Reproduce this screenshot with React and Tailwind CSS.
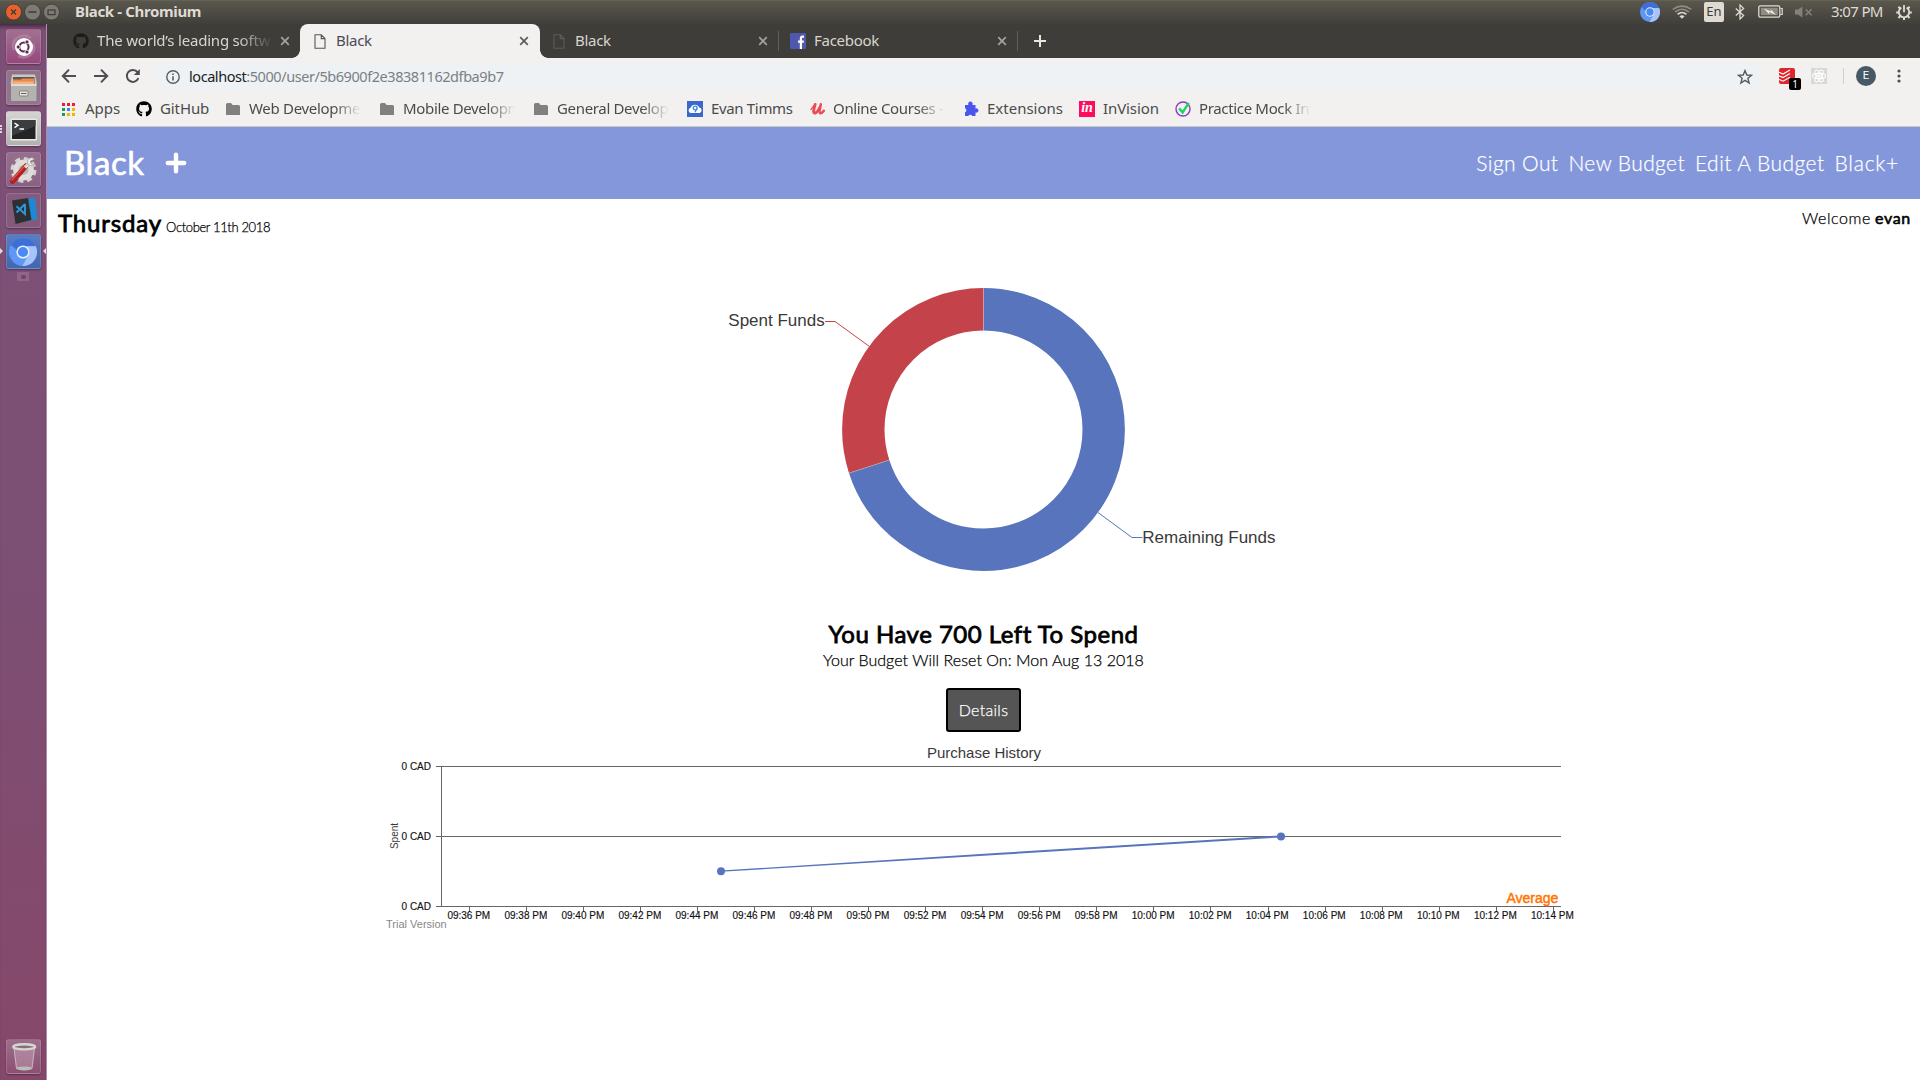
import React from "react";
import { FaGithub } from "react-icons/fa";

const UBUNTU = "font-['Noto_Sans',sans-serif]";
const QUICK = "font-['Lato',sans-serif]";

function Close({ className = "" }) {
  return (
    <svg viewBox="0 0 10 10" className={"size-[10px] shrink-0 " + className}>
      <path d="M1.2 1.2 8.8 8.8M8.8 1.2 1.2 8.8" stroke="currentColor" strokeWidth="1.7" />
    </svg>
  );
}

function Doc({ className = "" }) {
  return (
    <svg viewBox="0 0 12 15" className={"h-[15px] w-3 shrink-0 " + className}>
      <path d="M1 .8H7.2L11 4.6V14.2H1ZM7.2 .8V4.6H11" fill="none" stroke="currentColor" strokeWidth="1.1" />
    </svg>
  );
}

function Chromium({ className = "" }) {
  return (
    <svg viewBox="0 0 28 28" className={"shrink-0 " + className}>
      <circle cx="14" cy="14" r="14" fill="#5f97f6" />
      <path d="M14 0A14 14 0 0 1 26.8 8.3H14A6 6 0 0 0 8.3 12.5L2 7A14 14 0 0 1 14 0Z" fill="#3e6fd6" />
      <path d="M26.8 8.3A14 14 0 0 1 13.4 28L19.6 16.6A6 6 0 0 0 17 8.3Z" fill="#a6c4fb" />
      <circle cx="14" cy="14" r="6.6" fill="#e9f0fe" />
      <circle cx="14" cy="14" r="5.1" fill="#4a8af4" />
    </svg>
  );
}

function TitleBar() {
  return (
    <div className="flex h-6 items-center border-t border-[#646152] bg-linear-to-b from-[#5a574e] to-[#403f3a] pb-[2px]">
      <svg viewBox="0 0 62 22" className="h-[22px] w-[62px] shrink-0">
        <circle cx="13.5" cy="11" r="8" fill="#e9602f" stroke="#3a3833" strokeWidth=".8" />
        <circle cx="32.5" cy="11" r="8" fill="#7c7a72" stroke="#3a3833" strokeWidth=".8" />
        <circle cx="51.5" cy="11" r="8" fill="#7c7a72" stroke="#3a3833" strokeWidth=".8" />
        <path d="M11 8.5 16 13.5M16 8.5 11 13.5M28.5 11H36.5" stroke="#3c3b37" strokeWidth="1.3" />
        <rect x="48" y="9" width="7" height="4.6" fill="none" stroke="#3c3b37" strokeWidth="1.2" />
      </svg>
      <span className={`ml-[13px] text-[15px] font-bold tracking-[-0.35px] text-[#dfdbd2] ${UBUNTU}`}>Black - Chromium</span>
      <div className="ml-auto flex h-full items-center text-[#dfdbd2]">
        <Chromium className="mr-3 size-5" />
        <svg viewBox="0 0 20 14" className="mr-3 h-3.5 w-5" fill="none" strokeWidth="1.6">
          <path d="M.8 4.4Q10 -2.2 19.2 4.4M3.2 7Q10 1.6 16.8 7" stroke="#8f8c83" />
          <path d="M5.6 9.4Q10 5.6 14.4 9.4" stroke="#dfdbd2" />
          <path d="M7.4 11.2Q10 9.4 12.6 11.2L10 13.8Z" fill="#dfdbd2" stroke="none" />
        </svg>
        <span className={`mr-2.5 flex size-5 items-center justify-center rounded-[2px] bg-[#dfdbd2] text-[13px] text-[#3c3b37] ${UBUNTU}`}>En</span>
        <svg viewBox="0 0 12 16" className="mr-3 h-4 w-3" fill="none" stroke="currentColor" strokeWidth="1.3">
          <path d="M1.8 4.4 9.6 11.6 6 15V1L9.6 4.4 1.8 11.6" />
        </svg>
        <svg viewBox="0 0 25 13" className="mr-3 h-[13px] w-[25px]">
          <rect x=".8" y=".8" width="21" height="11.4" rx="1.6" fill="none" stroke="#dfdbd2" strokeWidth="1.3" />
          <rect x="2.8" y="2.8" width="17" height="7.4" fill="#8f8c83" />
          <path d="M22.5 3.5H24.2V9.5H22.5" fill="none" stroke="#dfdbd2" strokeWidth="1.2" />
          <path d="M6 3.4 13 6.6 12.6 4.2 18 10 11 7 11.4 9.4Z" fill="#f2efe8" />
        </svg>
        <svg viewBox="0 0 18 12" className="mr-[18px] h-3 w-[18px]">
          <path d="M0 3.6H3L7.4 .4V11.6L3 8.4H0Z" fill="#83817a" />
          <path d="M10.6 3.2 16.6 9.2M16.6 3.2 10.6 9.2" stroke="#83817a" strokeWidth="1.5" />
        </svg>
        <span className={`w-[53px] text-[15px] tracking-[-0.65px] whitespace-nowrap ${UBUNTU}`}>3:07 PM</span>
        <svg viewBox="0 0 16 16" className="mr-2 ml-3 size-4" fill="none" stroke="currentColor">
          <path d="M5.4 3.6A5.2 5.2 0 1 0 10.6 3.6" strokeWidth="1.8" />
          <path d="M8 1V8.2" strokeWidth="1.8" />
          <path d="M8 13.4V16M.2 8.4H2.8M13.2 8.4H15.8M2.4 2.8 4.4 4.8M13.6 2.8 11.6 4.8M2.4 14 4.4 12M13.6 14 11.6 12" strokeWidth="2" />
        </svg>
      </div>
    </div>
  );
}

function Tile({ className = "", children }) {
  return (
    <div className={"flex size-[35px] shrink-0 items-center justify-center rounded-[3px] border border-white/15 shadow-[0_1px_2px_rgba(0,0,0,0.35)] " + className}>
      {children}
    </div>
  );
}

function Launcher() {
  return (
    <aside className="relative flex w-[47px] shrink-0 flex-col items-center gap-1.5 border-r border-[#b189ab] bg-linear-to-b from-[#7e5078] via-[#7c4f74] to-[#86486a] pt-[5px] shadow-[inset_0_6px_5px_-4px_rgba(30,10,30,0.7)]">
      <Tile className="bg-linear-to-b from-[#a0718f] to-[#96487e]">
        <svg viewBox="0 0 33 33" className="size-[33px]">
          <path d="M7 20C3 10 14 2 24 8M26 14C30 22 20 30 11 26" fill="none" stroke="#b88aa8" strokeWidth="3" opacity=".6" />
          <circle cx="17" cy="17" r="9" fill="#fff" />
          <circle cx="17" cy="17" r="4.6" fill="none" stroke="#5e2750" strokeWidth="2" />
          <g fill="#5e2750" stroke="#fff" strokeWidth=".8">
            <circle cx="11.2" cy="17" r="2" />
            <circle cx="20" cy="11.9" r="2" />
            <circle cx="20" cy="22.1" r="2" />
          </g>
        </svg>
      </Tile>
      <Tile className="bg-linear-to-b from-[#8f7288] to-[#95748f]">
        <svg viewBox="0 0 33 33" className="size-[33px]">
          <path d="M5 3.5H28L30 13H3.5Z" fill="#c9c7c3" />
          <path d="M6 6H27.5V13H6Z" fill="#5e5750" />
          <path d="M6 8.5H14L15 7.5H27V14H6Z" fill="#ec8a4b" />
          <path d="M6.4 10.5H26.8V14H6.4Z" fill="#f5b27d" />
          <rect x="4" y="13" width="25.5" height="17" rx="1" fill="#b4b2af" />
          <rect x="4" y="13" width="25.5" height="2" fill="#deddda" />
          <rect x="12.5" y="20" width="8.5" height="5" rx="1" fill="#e6e4e1" stroke="#77746f" strokeWidth=".8" />
          <path d="M14 22.5H19.5" stroke="#66625d" />
        </svg>
      </Tile>
      <Tile className="bg-linear-to-b from-[#d5d4d3] to-[#b3b1b0]">
        <svg viewBox="0 0 33 33" className="size-[33px]">
          <rect x="3.5" y="6.5" width="26.5" height="22" rx="1" fill="#e8e8e6" />
          <rect x="5" y="8" width="23.5" height="19" fill="#232425" />
          <path d="M5 8H28.5V14L5 24Z" fill="#3b3d3e" />
          <path d="M7.5 11 11 13.3 7.5 15.6M12.5 17H17" fill="none" stroke="#fff" strokeWidth="1.4" />
        </svg>
      </Tile>
      <Tile className="bg-linear-to-b from-[#95708d] to-[#8a6083]">
        <svg viewBox="0 0 33 33" className="size-[33px]">
          <circle cx="16.5" cy="17" r="11" fill="none" stroke="#d4d2cf" strokeWidth="4" strokeDasharray="5 3.64" />
          <circle cx="16.5" cy="17" r="10.5" fill="#deddda" />
          <circle cx="16.5" cy="17" r="5" fill="#b9b5b6" />
          <path d="M5.5 28.5 19 13" stroke="#b51f22" strokeWidth="5" strokeLinecap="round" />
          <path d="M5 27 17.5 13" stroke="#df5552" strokeWidth="1.2" strokeLinecap="round" />
          <path d="M18 14.5 21 11.5" stroke="#d8d8d8" strokeWidth="3.4" />
          <path d="M27.5 6.2A4 4 0 1 0 27.5 11.5L24 10.8 23.5 8Z" fill="#ececec" stroke="#8e8e8e" strokeWidth=".6" />
        </svg>
      </Tile>
      <Tile className="bg-linear-to-b from-[#855a7d] to-[#835a7b]">
        <svg viewBox="0 0 33 33" className="size-[33px]">
          <path d="M14 6 28 3.5 30.5 25 18 28Z" fill="#1e88d2" />
          <path d="M5 6.5 21 4 24.5 26 8.5 30Z" fill="#2e2f31" />
          <path d="M18 10V20L9.5 12.2M18 10 9.5 18.5" fill="none" stroke="#2d94dc" strokeWidth="2" />
        </svg>
      </Tile>
      <Tile className="bg-linear-to-b from-[#5a7cc2] to-[#4366ad]">
        <Chromium className="size-7" />
      </Tile>
      <div className="-mt-[3px] flex h-[9px] w-3 items-center justify-center bg-[#8f6687]">
        <span className="h-1 w-[5px] rounded-full bg-[#6d4568]" />
      </div>
      <Tile className="mt-auto mb-1.5 bg-linear-to-b from-[#9d6d8b] to-[#8c4f74]">
        <svg viewBox="0 0 33 33" className="size-[33px]">
          <path d="M6.5 7 9 29H25.5L28 7Z" fill="#c9a9bc" opacity=".45" />
          <path d="M7 8 9.5 28M27.5 8 25 28" stroke="#d9c8d2" strokeWidth="1" opacity=".7" />
          <ellipse cx="17.2" cy="28.4" rx="8" ry="2" fill="#b9bfb4" />
          <ellipse cx="17.2" cy="6.8" rx="11" ry="2.6" fill="#8d6a80" stroke="#d5d8d1" strokeWidth="2.4" />
        </svg>
      </Tile>
      <span className="absolute top-[101px] left-0 h-2 w-0.5 bg-[repeating-linear-gradient(#ddd_0_2px,transparent_2px_3px)]" />
      <svg viewBox="0 0 46 8" className="absolute top-[223px] left-0 h-2 w-[46px]" fill="#ddd">
        <path d="M0 1 3 4 0 7ZM46 1 43 4 46 7Z" />
      </svg>
    </aside>
  );
}

const fade = "[mask-image:linear-gradient(to_right,black_80%,transparent)]";

function TabStrip() {
  return (
    <div className={`flex h-[34px] bg-[#3e3d39] text-[15px] tracking-[-0.28px] whitespace-nowrap text-[#d9d6ce] ${UBUNTU}`}>
      <div className="flex w-[253px] items-center pl-[26px]">
        <FaGithub className="size-4 text-[#1c1c1a]" />
        <span className={`ml-2 w-[176px] pb-0.5 tracking-[-0.2px] ${fade}`}>The world’s leading softw</span>
        <Close className="ml-[7px] text-[#a5a39d]" />
      </div>
      <div className="relative flex w-60 items-center rounded-t-lg bg-[#f2f1f0] text-[#4a4a55]">
        <span className="absolute bottom-0 -left-2 size-2 bg-[radial-gradient(circle_at_0_0,transparent_7.5px,#f2f1f0_8px)]" />
        <span className="absolute -right-2 bottom-0 size-2 bg-[radial-gradient(circle_at_100%_0,transparent_7.5px,#f2f1f0_8px)]" />
        <Doc className="ml-3.5 text-[#55565a]" />
        <span className="ml-2.5 w-[183px] pb-0.5">Black</span>
        <Close className="text-[#5a5b5f]" />
      </div>
      <div className="flex w-[239px] items-center">
        <Doc className="ml-[13px] text-[#5d5c58]" />
        <span className="ml-2.5 w-[184px] pb-0.5">Black</span>
        <Close className="text-[#a5a39d]" />
        <span className="ml-2.5 h-5 w-px bg-[#5f5e59]" />
      </div>
      <div className="flex items-center">
        <svg viewBox="0 0 16 16" className="ml-[11px] size-4 shrink-0">
          <rect width="16" height="16" rx="1" fill="#4e58ae" />
          <path d="M14 3.6H12.6Q10.9 3.6 10.9 5.4V16M8 8.6H13.8" fill="none" stroke="#fff" strokeWidth="2.2" />
        </svg>
        <span className="ml-2 w-[183px] pb-0.5">Facebook</span>
        <Close className="text-[#a5a39d]" />
        <span className="ml-2.5 h-5 w-px bg-[#5f5e59]" />
        <svg viewBox="0 0 12 12" className="ml-4 size-3">
          <path d="M6 0V12M0 6H12" stroke="#e9e6da" strokeWidth="2" />
        </svg>
      </div>
    </div>
  );
}

function Toolbar() {
  return (
    <div className="flex h-9 items-center bg-[#f2f1f0] text-[#4d4e52]">
      <svg viewBox="0 0 16 16" className="ml-3.5 size-4" fill="none" stroke="currentColor" strokeWidth="2">
        <path d="M15 8H2M8 1.6 1.8 8 8 14.4" />
      </svg>
      <svg viewBox="0 0 16 16" className="ml-4 size-4" fill="none" stroke="currentColor" strokeWidth="2">
        <path d="M1 8H14M8 1.6 14.2 8 8 14.4" />
      </svg>
      <svg viewBox="0 0 16 16" className="ml-4 size-4" fill="none" stroke="currentColor" strokeWidth="2">
        <path d="M13.4 10.2A6 6 0 1 1 12.6 4.2" />
        <path d="M14.8 1V7H8.8Z" fill="currentColor" stroke="none" />
      </svg>
      <div className={`mt-0.5 ml-3.5 flex h-7 flex-1 items-center rounded-full bg-[#eef2f4] text-[14.5px] tracking-[-0.44px] ${UBUNTU}`}>
        <svg viewBox="0 0 14 14" className="ml-[11px] size-3.5" fill="none" stroke="#5a5d61" strokeWidth="1.4">
          <circle cx="7" cy="7" r="6.2" />
          <path d="M7 6.2V10.4M7 3.4V4.9" strokeWidth="1.6" />
        </svg>
        <span className="ml-[9px] pb-px whitespace-nowrap text-[#7c8085]">
          <span className="text-[#202124]">localhost</span>:5000/user/5b6900f2e38381162dfba9b7
        </span>
        <svg viewBox="0 0 16 16" className="mr-2.5 ml-auto size-4" fill="none" stroke="#55585c" strokeWidth="1.4">
          <path d="M8 1.6 9.8 6 14.6 6.3 10.9 9.3 12.1 14 8 11.4 3.9 14 5.1 9.3 1.4 6.3 6.2 6Z" />
        </svg>
      </div>
      <span className="relative ml-4 size-4 rounded-[2px] bg-[#e0262c]">
        <svg viewBox="0 0 16 16" className="size-4" fill="none" stroke="#fff" strokeWidth="1.2">
          <path d="M0 4.2 4 6 11 2M0 7.8 4 9.6 11 5.6M0 11.4 4 13.2 11 9.2" />
        </svg>
        <span className={`absolute top-2.5 left-2.5 flex h-3 w-3 items-center justify-center rounded-[2px] bg-black text-[10px] leading-none text-white ${UBUNTU}`}>1</span>
      </span>
      <svg viewBox="0 0 16 16" className="ml-4 size-4 bg-[#d8d8d7]" fill="none" stroke="#fff" strokeWidth="1.1">
        <ellipse cx="8" cy="8" rx="6.6" ry="2.6" />
        <ellipse cx="8" cy="8" rx="6.6" ry="2.6" transform="rotate(60 8 8)" />
        <ellipse cx="8" cy="8" rx="6.6" ry="2.6" transform="rotate(120 8 8)" />
        <circle cx="8" cy="8" r="1" fill="#fff" />
      </svg>
      <span className="ml-4 h-4 w-px bg-[#cfcfce]" />
      <span className="ml-3 flex size-5 items-center justify-center rounded-full bg-[#455a64] font-['Roboto',sans-serif] text-[11px] text-white">E</span>
      <svg viewBox="0 0 4 14" className="mr-[19px] ml-[21px] h-3.5 w-1" fill="#4d4e52">
        <circle cx="2" cy="2" r="1.6" />
        <circle cx="2" cy="7" r="1.6" />
        <circle cx="2" cy="12" r="1.6" />
      </svg>
    </div>
  );
}

function Folder() {
  return (
    <svg viewBox="0 0 14 12" className="h-3 w-3.5 shrink-0">
      <path d="M0 1.5Q0 0 1.5 0H5L6.5 2H12.5Q14 2 14 3.5V12H0Z" fill="#808080" />
    </svg>
  );
}

function Bookmark({ icon, label, className = "", iconWidth = "w-6" }) {
  return (
    <div className={"flex shrink-0 items-center " + className}>
      <span className={"flex shrink-0 items-center " + iconWidth}>{icon}</span>
      <span className="pb-0.5">{label}</span>
    </div>
  );
}

const APP_COLORS = ["#ef1c34", "#ef1c34", "#ef1c34", "#15a05b", "#4a7cf0", "#f4b400", "#15a05b", "#f4b400", "#f4b400"];

function Bookmarks() {
  return (
    <div className={`flex h-[33px] items-center border-b border-[#c9c8c6] bg-[#f2f1f0] pb-0.5 pl-[15px] text-[15px] tracking-[-0.34px] whitespace-nowrap text-[#4b4b4b] ${UBUNTU}`}>
      <Bookmark
        className="w-[74px] tracking-normal"
        label="Apps"
        iconWidth="w-[23px]"
        icon={
          <span className="grid grid-cols-3 gap-[2px]">
            {APP_COLORS.map((c, i) => (
              <span key={i} className="size-[3px]" style={{ background: c }} />
            ))}
          </span>
        }
      />
      <Bookmark className="w-[90px] tracking-[-0.1px]" label="GitHub" icon={<FaGithub className="size-4 text-black" />} />
      <Bookmark className={`mr-[19px] w-[135px] tracking-[-0.3px] ${fade}`} label="Web Developme" iconWidth="w-[23px]" icon={<Folder />} />
      <Bookmark className={`mr-[19px] w-[135px] ${fade}`} label="Mobile Developm" iconWidth="w-[23px]" icon={<Folder />} />
      <Bookmark className={`mr-[18px] w-[135px] ${fade}`} label="General Develop" iconWidth="w-[23px]" icon={<Folder />} />
      <Bookmark
        className="w-[123px]"
        label="Evan Timms"
        icon={
          <svg viewBox="0 0 16 16" className="size-4">
            <rect width="16" height="16" fill="#3d67cc" />
            <path d="M3.5 12A2.7 2.7 0 0 1 3.6 6.8 4.6 4.6 0 0 1 12.2 6.6 2.8 2.8 0 0 1 12.8 12Z" fill="#fff" />
            <circle cx="8.2" cy="7" r="1.9" fill="#fff" stroke="#3b8bd8" strokeWidth="1.4" />
            <path d="M9.8 7.6 8 11.2" stroke="#3b8bd8" strokeWidth="1.2" />
          </svg>
        }
      />
      <Bookmark
        className={`mr-[19px] w-[135px] ${fade}`}
        label="Online Courses -"
        iconWidth="w-[23px]"
        icon={
          <svg viewBox="0 0 16 16" className="size-4" fill="none" stroke="#ec4a55" strokeLinecap="round" strokeLinejoin="round">
            <path d="M1 8.4 4 4.6" strokeWidth="1.4" />
            <path d="M5.2 3.4C4.6 6 3.4 9 3.6 10.8 3.8 13.4 7.6 12 9.4 7" strokeWidth="2.8" />
            <path d="M10.8 3.4C10.2 6.600 8.800 11.600 10.200 12.200 11.400 12.500 12.800 11.200 13.800 9.800" strokeWidth="2.6" />
          </svg>
        }
      />
      <Bookmark
        className="w-[115px] tracking-normal"
        label="Extensions"
        iconWidth="w-[23px]"
        icon={
          <svg viewBox="0 0 15 16" className="h-4 w-[15px]" fill="#4a55ee">
            <path d="M1 4H4.400A2.300 2.300 0 1 1 8.400 4H11.500V7.400A2.200 2.200 0 1 1 11.500 11.500V15H8.200A2.100 2.100 0 0 0 4.300 15H1V11.400A2.200 2.200 0 0 0 1 7.300Z" />
          </svg>
        }
      />
      <Bookmark
        className="w-24 tracking-[-0.1px]"
        label="InVision"
        icon={<span className="flex size-4 items-center justify-center bg-[#ff0b5e] pb-0.5 font-['Liberation_Serif',serif] text-[14px] leading-none font-bold text-white italic">in</span>}
      />
      <Bookmark
        className={`w-[136px] ${fade}`}
        label="Practice Mock Int"
        icon={
          <svg viewBox="0 0 16 16" className="size-4" fill="none">
            <circle cx="8" cy="8" r="7" stroke="#9136c9" strokeWidth="1.4" />
            <path d="M4.2 7.4 7.6 11.4 13.8 1.8" stroke="#18d860" strokeWidth="2.4" />
          </svg>
        }
      />
    </div>
  );
}

function FundsDonut() {
  const cx = 983.5;
  const cy = 429.5;
  const r = 120.2;
  const c = 2 * Math.PI * r;
  return (
    <svg viewBox="47 270 1873 335" className="block h-[335px] w-full font-['Liberation_Sans',sans-serif] text-[17px]" fill="none">
      <g transform={`rotate(-90 ${cx} ${cy})`} strokeWidth="42.4">
        <circle cx={cx} cy={cy} r={r} stroke="#5774bd" strokeDasharray={`${c * 0.7} ${c}`} />
        <circle cx={cx} cy={cy} r={r} stroke="#c4434a" strokeDasharray={`${c * 0.3} ${c}`} strokeDashoffset={-c * 0.7} />
      </g>
      <path d="M983.5 288V330.4M849 473.2 889.3 460.1" stroke="#fff" strokeWidth=".7" opacity=".35" />
      <path d="M825 321.5H835L869.5 346.5" stroke="#c4434a" />
      <path d="M1142.5 537.5H1132L1098 512.5" stroke="#5774bd" />
      <text x="728.3" y="326" fill="#3a3a3a">Spent Funds</text>
      <text x="1142.3" y="543" fill="#3a3a3a">Remaining Funds</text>
    </svg>
  );
}

const TIMES = Array.from({ length: 20 }, (_, i) => {
  const m = 36 + i * 2;
  return m < 60 ? `09:${m} PM` : `10:${String(m - 60).padStart(2, "0")} PM`;
});

function PurchaseChart() {
  return (
    <svg viewBox="47 740 1873 200" className="block h-[200px] w-full font-['Liberation_Sans',sans-serif] text-[10px]" fill="#111">
      <text x="984" y="758" textAnchor="middle" fill="#3a3a3a" className="text-[15px]">Purchase History</text>
      <g stroke="#666" strokeWidth="1">
        <path d="M436 766.5H1561M436 836.5H1561M436 906.5H1561M441.5 766V907" />
        {TIMES.map((t, i) => {
          const x = Math.floor(469.3 + i * 57.05) + 0.5;
          return <path key={t} d={`M${x} 907V912`} />;
        })}
      </g>
      <g stroke="#111" strokeWidth=".15">
        {[770, 840, 910].map((y) => (
          <text key={y} x="431" y={y} textAnchor="end">0 CAD</text>
        ))}
        {TIMES.map((t, i) => (
          <text key={t} x={468.8 + i * 57.03} y="919" textAnchor="middle">{t}</text>
        ))}
      </g>
      <text transform="translate(397.5 836) rotate(-90)" textAnchor="middle" fill="#3a3a3a">Spent</text>
      <path d="M721 870.6 1000 852.8 1281 835.4V837.4L1000 854.8 721 871.8Z" fill="#5774bd" />
      <circle cx="721" cy="871.3" r="4" fill="#5774bd" />
      <circle cx="1281" cy="836.5" r="4" fill="#5774bd" />
      <text x="1506.5" y="903" fill="#ff7300" stroke="#ff7300" strokeWidth=".45" className="text-[14px]">Average</text>
      <text x="386" y="928" fill="#888" className="text-[11px]">Trial Version</text>
    </svg>
  );
}

const heavy = "[-webkit-text-stroke:0.8px_currentColor]";
const hair = "[-webkit-text-stroke:0.25px_currentColor]";

function Page() {
  return (
    <main className={`flex flex-1 flex-col bg-white text-black ${QUICK}`}>
      <header className="flex h-[72px] items-center bg-[#8497db] pr-[21px] pl-[17px] text-white">
        <span className="w-[101px] text-[33px] tracking-[0.6px] [-webkit-text-stroke:0.6px_currentColor]">Black</span>
        <svg viewBox="0 0 22 22" className="size-[22px]" fill="none" stroke="currentColor" strokeWidth="4.4" strokeLinecap="round">
          <path d="M11 2.8V19.2M2.8 11H19.2" />
        </svg>
        <nav className={`ml-auto flex gap-[10px] text-[21px] font-light tracking-[0.4px] whitespace-nowrap ${hair}`}>
          <a>Sign Out</a>
          <a>New Budget</a>
          <a className="tracking-[0.45px]">Edit A Budget</a>
          <a className="tracking-[0.75px]">Black+</a>
        </nav>
      </header>
      <div className="flex h-[71px] justify-between pr-[9px] pl-[11px]">
        <div className="flex items-baseline gap-1 pt-[6px]">
          <span className={`text-[24px] tracking-[0.85px] ${heavy}`}>Thursday</span>
          <span className={`text-[13px] font-light tracking-[-0.36px] ${hair}`}>October 11th 2018</span>
        </div>
        <div className="pt-[7px] text-[16px]">
          <span className={`font-light tracking-[0.55px] ${hair}`}>Welcome</span>{" "}
          <span className="tracking-[0.7px] [-webkit-text-stroke:0.6px_currentColor]">evan</span>
        </div>
      </div>
      <FundsDonut />
      <div className="flex h-[135px] flex-col items-center">
        <h1 className={`mt-[14px] text-[24px] leading-[30px] tracking-[0.5px] ${heavy}`}>You Have 700 Left To Spend</h1>
        <p className={`mt-px text-[16px] leading-5 font-light tracking-[0.04px] ${hair}`}>Your Budget Will Reset On: Mon Aug 13 2018</p>
        <button className="mt-[18px] flex h-11 w-[75px] items-center justify-center rounded-[3px] border-2 border-black bg-[#555] text-[16px] text-white">
          <span className={`font-light tracking-[0.3px] ${hair}`}>Details</span>
        </button>
      </div>
      <PurchaseChart />
    </main>
  );
}

export default function App() {
  return (
    <div className="flex h-[1080px] w-[1920px] flex-col overflow-hidden">
      <TitleBar />
      <div className="flex min-h-0 flex-1">
        <Launcher />
        <div className="flex min-w-0 flex-1 flex-col">
          <TabStrip />
          <Toolbar />
          <Bookmarks />
          <Page />
        </div>
      </div>
    </div>
  );
}
